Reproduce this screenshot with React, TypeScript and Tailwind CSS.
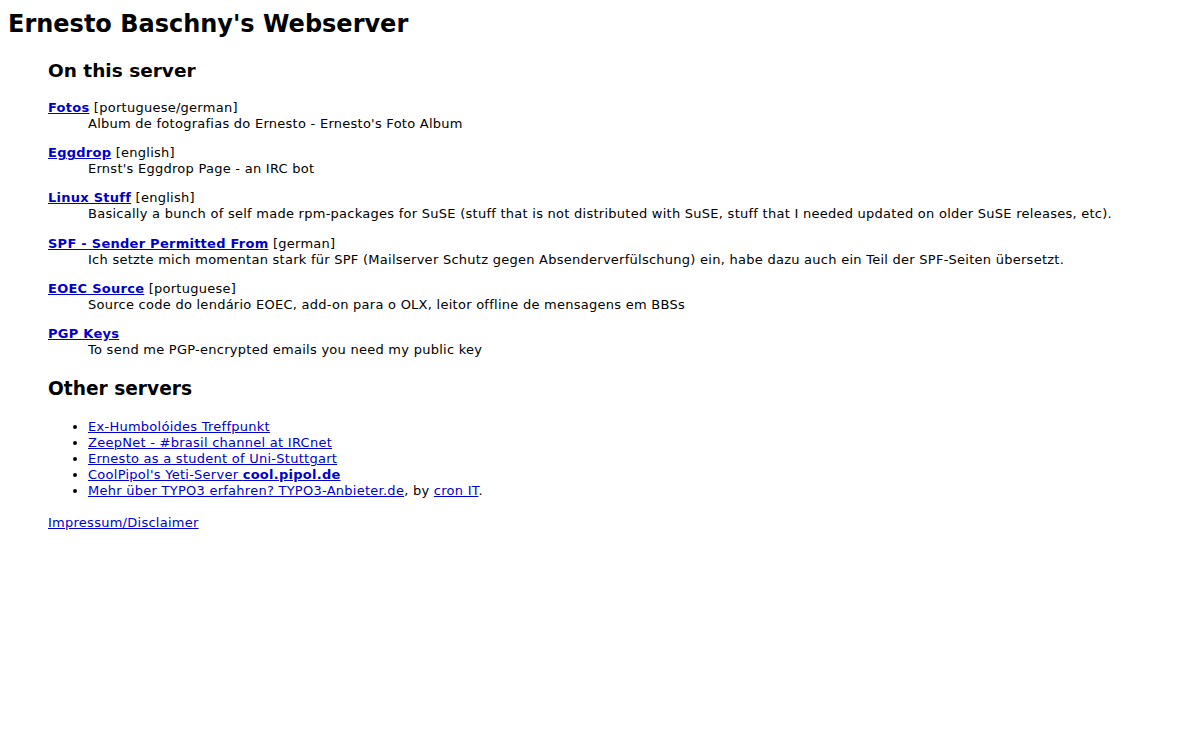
const items = [
  {
    title: "Fotos",
    lang: "portuguese/german",
    desc: "Album de fotografias do Ernesto - Ernesto's Foto Album",
  },
  { title: "Eggdrop", lang: "english", desc: "Ernst's Eggdrop Page - an IRC bot" },
  {
    title: "Linux Stuff",
    lang: "english",
    desc: "Basically a bunch of self made rpm-packages for SuSE (stuff that is not distributed with SuSE, stuff that I needed updated on older SuSE releases, etc).",
  },
  {
    title: "SPF - Sender Permitted From",
    lang: "german",
    desc: "Ich setzte mich momentan stark für SPF (Mailserver Schutz gegen Absenderverfülschung) ein, habe dazu auch ein Teil der SPF-Seiten übersetzt.",
  },
  {
    title: "EOEC Source",
    lang: "portuguese",
    desc: "Source code do lendário EOEC, add-on para o OLX, leitor offline de mensagens em BBSs",
  },
  {
    title: "PGP Keys",
    lang: "",
    desc: "To send me PGP-encrypted emails you need my public key",
  },
];

const link = "text-[#0000cc] underline";

export default function App() {
  return (
    <div className="min-h-[740px] bg-white px-2 py-2 text-[13px] leading-4 tracking-[0.26px] text-black font-['Verdana','DejaVu_Sans',sans-serif]">
      <h1 className="mt-[2px] text-[24px] leading-[28px] font-bold tracking-normal">Ernesto Baschny's Webserver</h1>
      <div className="ml-10">
        <h2 className="mt-[22px] text-[18.5px] leading-[22px] font-bold tracking-normal">On this server</h2>
        <div className="mt-[18px]">
          {items.map((it) => (
            <dl key={it.title} className="mb-[13.2px]">
              <dt>
                <a href="#" className={`${link} font-bold`}>
                  {it.title}
                </a>
                {it.lang && <span> [{it.lang}]</span>}
              </dt>
              <dd className="ml-10">{it.desc}</dd>
            </dl>
          ))}
        </div>
        <h2 className="mt-[20px] text-[18.6px] leading-[22px] font-bold tracking-normal">Other servers</h2>
        <ul className="mt-[19px] ml-10 list-disc">
          <li>
            <a href="#" className={link}>Ex-Humbolóides Treffpunkt</a>
          </li>
          <li>
            <a href="#" className={link}>ZeepNet - #brasil channel at IRCnet</a>
          </li>
          <li>
            <a href="#" className={link}>Ernesto as a student of Uni-Stuttgart</a>
          </li>
          <li>
            <a href="#" className={link}>
              CoolPipol's Yeti-Server <b>cool.pipol.de</b>
            </a>
          </li>
          <li>
            <a href="#" className={link}>Mehr über TYPO3 erfahren? TYPO3-Anbieter.de</a>, by{" "}
            <a href="#" className={link}>cron IT</a>.
          </li>
        </ul>
        <p className="mt-4">
          <a href="#" className={link}>Impressum/Disclaimer</a>
        </p>
      </div>
    </div>
  );
}
